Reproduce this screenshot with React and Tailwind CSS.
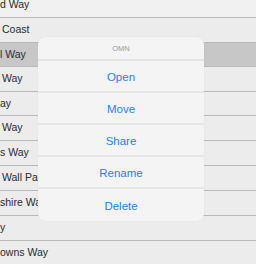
const rows = [
  { label: 'd Way', h: 'h-[25px]', pl: 'pl-0', top: true },
  { label: 'Coast', h: 'h-[25px]', pl: 'pl-[2px]' },
  { label: 'l Way', h: 'h-[24px]', pl: 'pl-0', active: true },
  { label: 'Way', h: 'h-[25px]', pl: 'pl-[2px]' },
  { label: 'ay', h: 'h-[24px]', pl: 'pl-0' },
  { label: 'Way', h: 'h-[25px]', pl: 'pl-[2px]' },
  { label: 's Way', h: 'h-[25px]', pl: 'pl-0' },
  { label: 'Wall Pat', h: 'h-[25px]', pl: 'pl-[2px]' },
  { label: 'shire Way', h: 'h-[25px]', pl: 'pl-0' },
  { label: 'y', h: 'h-[25px]', pl: 'pl-0' },
  { label: 'owns Way', h: 'h-[25px]', pl: 'pl-0', last: true },
];

const actions = ['Open', 'Move', 'Share', 'Rename', 'Delete'];

export default function App() {
  return (
    <div className="relative w-[256px] h-[264px] overflow-hidden bg-[#ededed] font-['Liberation_Sans',Arial,sans-serif]">
      {/* list behind the sheet */}
      <div className="-mt-[7px]">
        {rows.map((r, i) => (
          <div
            key={i}
            className={`${r.h} ${r.pl} flex items-center whitespace-nowrap text-[10.5px] text-[#2b2b2b] border-b border-[#b9b9b9] ${
              r.active ? 'bg-[#c7c7c7]' : r.top ? 'bg-[#f1f1f1]' : 'bg-[#ececec]'
            }`}
          >
            {r.label}
          </div>
        ))}
      </div>

      {/* action sheet */}
      <div className="absolute left-[38px] top-[37px] w-[166px] rounded-[8px] bg-[#f4f4f4] overflow-hidden shadow-[0_0_2px_rgba(0,0,0,0.05)]">
        <div className="h-[24px] pt-[1px] flex items-center justify-center text-[7.5px] text-[#9a9a9a] border-b-2 border-[#e3e3e3]">
          OMN
        </div>
        {actions.map((a, i) => (
          <div
            key={a}
            className={`h-[32px] pt-[3px] flex items-center justify-center text-[11.5px] text-[#1c82f7] ${
              i < actions.length - 1 ? 'border-b-2 border-[#e6e6e6]' : ''
            }`}
          >
            {a}
          </div>
        ))}
      </div>
    </div>
  );
}
